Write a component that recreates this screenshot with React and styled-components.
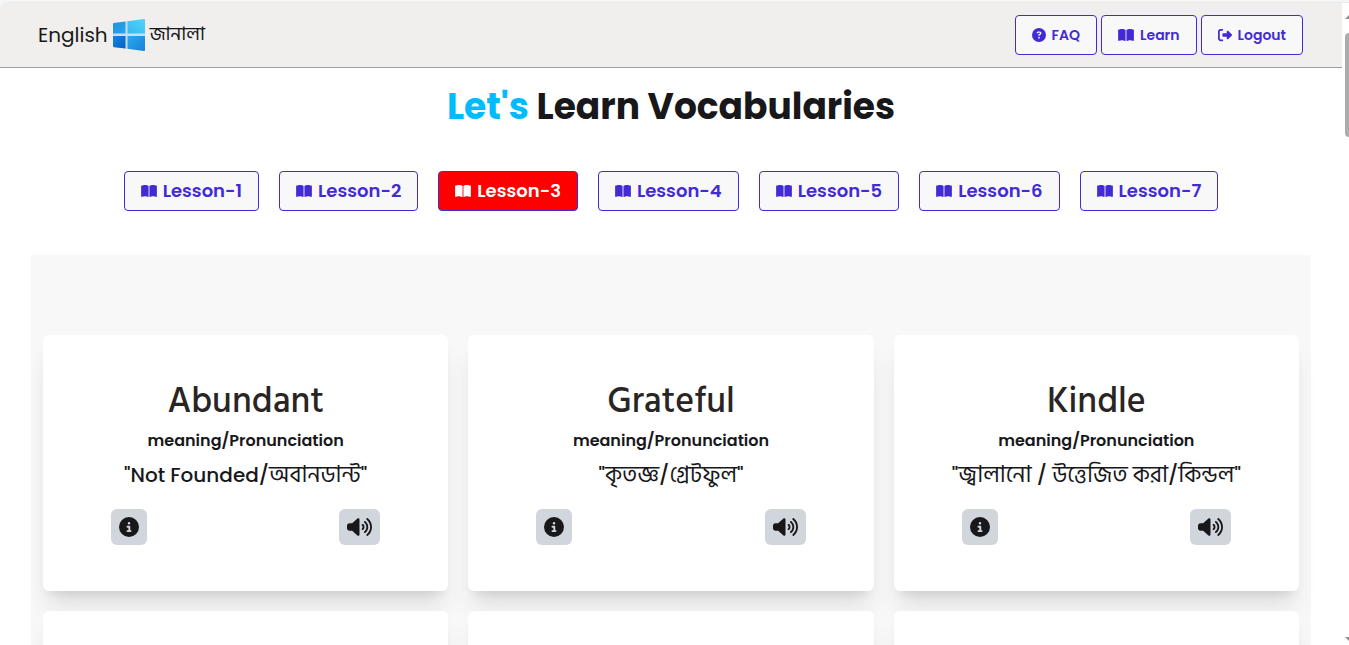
import React from 'react';
import styled, { createGlobalStyle } from 'styled-components';
import {
  FaCircleQuestion,
  FaBookOpen,
  FaRightFromBracket,
  FaCircleInfo,
  FaVolumeHigh,
} from 'react-icons/fa6';

const GlobalStyle = createGlobalStyle`
  *, *::before, *::after { box-sizing: border-box; }
  body {
    margin: 0;
    background: #f5f5f5;
    color: #18181b;
    font-family: Poppins, Inter, "Noto Sans", sans-serif;
    overflow: hidden;
  }
  h1, h2, p { margin: 0; }
`;

const Window = styled.div`
  display: flex;
  height: 100vh;
  padding-top: 2px;
`;

const Page = styled.div`
  flex: 1;
  min-width: 0;
  overflow: hidden;
  background: #ffffff;
  border-top: 1px solid #e9e9e9;
  border-top-left-radius: 8px;
`;

const ScrollTrack = styled.div`
  display: flex;
  flex-direction: column;
  align-items: flex-end;
  width: 7px;
  padding: 12px 0 4px;
  background: #ffffff;
  border-top: 1px solid #e9e9e9;
`;

const ScrollArrow = styled.svg`
  display: block;
  width: 4px;
  height: 4px;
  fill: #8f8f8f;
`;

const ScrollThumb = styled.div`
  width: 4px;
  height: 104px;
  margin: 14px 0 auto;
  background: #acacac;
  border-radius: 4px 0 0 4px;
`;

const Header = styled.header`
  display: flex;
  align-items: center;
  justify-content: space-between;
  padding: 12px 39px 12px 38px;
  background: #f0efed;
  border-bottom: 1px solid #9aa0a6;
`;

const Brand = styled.a`
  display: flex;
  align-items: center;
  gap: 4px;
  color: inherit;
  font-size: 20px;
  line-height: 28px;
  text-decoration: none;
`;

const Bengali = styled.span`
  font-family: "Hind Siliguri", "Noto Sans Bengali", "Noto Sans", sans-serif;
  font-size: ${(p) => p.$size || 23}px;
  font-weight: 400;
  line-height: 20px;
`;

const Logo = styled.svg`
  display: block;
  width: 34px;
  height: 32px;
`;

const Nav = styled.nav`
  display: flex;
  gap: 4px;
`;

const OutlineButton = styled.button`
  display: inline-flex;
  align-items: center;
  justify-content: center;
  gap: 6px;
  height: 40px;
  padding: 0 16px;
  border: 1px solid #422ad5;
  border-radius: 4px;
  background: ${(p) => (p.$active ? '#ff0000' : '#f8f8f8')};
  color: ${(p) => (p.$active ? '#ffffff' : '#422ad5')};
  font-family: inherit;
  font-size: ${(p) => (p.$large ? 18 : 14)}px;
  font-weight: 600;
  line-height: 20px;
  white-space: nowrap;
  cursor: pointer;

  svg {
    width: ${(p) => p.$icon || 16}px;
    height: 14px;
    flex: none;
  }
`;

const Title = styled.h1`
  margin-top: 19px;
  font-size: 36px;
  font-weight: 700;
  line-height: 40px;
  text-align: center;

  span { color: #00bcff; }
`;

const Lessons = styled.div`
  display: flex;
  flex-wrap: wrap;
  justify-content: center;
  gap: 20px;
  margin: 44px 0;
`;

const Words = styled.main`
  display: grid;
  grid-template-columns: repeat(3, 1fr);
  gap: 20px;
  max-width: 1280px;
  margin: 0 auto;
  padding: 80px 12px;
  background: #f8f8f8;
`;

const Card = styled.article`
  display: flex;
  flex-direction: column;
  align-items: center;
  min-height: 256px;
  padding: 46px 20px;
  background: #ffffff;
  border-radius: 6px;
  box-shadow: 0 20px 25px -5px rgba(0, 0, 0, 0.1), 0 8px 10px -6px rgba(0, 0, 0, 0.1);
`;

const Word = styled.h2`
  color: #292524;
  font-family: "Hind Siliguri", "Noto Sans", sans-serif;
  font-size: 36px;
  font-weight: 500;
  line-height: 40px;
`;

const Label = styled.p`
  margin-top: 8px;
  font-size: 16px;
  font-weight: 600;
  line-height: 24px;
`;

const Meaning = styled.p`
  margin-top: 8px;
  font-size: 20px;
  font-weight: 500;
  line-height: 28px;
  white-space: nowrap;
`;

const Actions = styled.div`
  display: flex;
  align-self: stretch;
  justify-content: space-between;
  margin-top: 20px;
  padding: 0 48px;
`;

const IconButton = styled.button`
  display: flex;
  padding: 8px;
  border: 0;
  border-radius: 6px;
  background: #d1d5dc;
  color: #18181b;
  cursor: pointer;

  svg {
    width: ${(p) => p.$icon}px;
    height: 20px;
  }
`;

const LESSONS = [1, 2, 3, 4, 5, 6, 7];

const WORDS = [
  { word: 'Abundant', meaning: <>"Not Founded/<Bengali>অবানডান্ট</Bengali>"</> },
  { word: 'Grateful', meaning: <>"<Bengali>কৃতজ্ঞ</Bengali>/<Bengali>গ্রেটফুল</Bengali>"</> },
  {
    word: 'Kindle',
    meaning: (
      <>
        "<Bengali>জ্বালানো</Bengali> / <Bengali>উত্তেজিত করা</Bengali>/<Bengali>কিন্ডল</Bengali>"
      </>
    ),
  },
];

function WindowLogo() {
  return (
    <Logo viewBox="0 0 34 32" aria-hidden="true">
      <defs>
        <linearGradient id="paneA" x1="0" y1="0" x2="1" y2="1">
          <stop offset="0" stopColor="#1f8fe0" />
          <stop offset="1" stopColor="#2ba6ec" />
        </linearGradient>
        <linearGradient id="paneB" x1="0" y1="1" x2="1" y2="0">
          <stop offset="0" stopColor="#37b8f2" />
          <stop offset="1" stopColor="#52d4fb" />
        </linearGradient>
        <linearGradient id="paneC" x1="0" y1="0" x2="1" y2="1">
          <stop offset="0" stopColor="#1587dd" />
          <stop offset="1" stopColor="#0560c4" />
        </linearGradient>
        <linearGradient id="paneD" x1="0" y1="0" x2="1" y2="1">
          <stop offset="0" stopColor="#2ba9ee" />
          <stop offset="1" stopColor="#1781d8" />
        </linearGradient>
      </defs>
      <path fill="#c9dfee" d="M1 4.200 33 0V32L1 28Z" />
      <path fill="url(#paneA)" d="M2 4 13.500 2.500V14.500H1V5Q1 4.200 2 4Z" />
      <path fill="url(#paneB)" d="M15.500 2.300 32 0Q33 0 33 1V14.500H15.500Z" />
      <path fill="url(#paneC)" d="M1 17H13.500V29.500L2 28.200Q1 28 1 27Z" />
      <path fill="url(#paneD)" d="M15.500 17H33V31Q33 32 32 32L15.500 29.700Z" />
    </Logo>
  );
}

export default function App() {
  return (
    <>
      <GlobalStyle />
      <Window>
        <Page>
          <Header>
            <Brand href="#home">
              <span>English</span>
              <WindowLogo />
              <Bengali $size={19}>জানালা</Bengali>
            </Brand>
            <Nav>
              <OutlineButton $icon={14}><FaCircleQuestion />FAQ</OutlineButton>
              <OutlineButton><FaBookOpen />Learn</OutlineButton>
              <OutlineButton $icon={14}><FaRightFromBracket />Logout</OutlineButton>
            </Nav>
          </Header>
          <Title><span>Let's</span> Learn Vocabularies</Title>
          <Lessons>
            {LESSONS.map((n) => (
              <OutlineButton key={n} $large $active={n === 3}>
                <FaBookOpen />Lesson-{n}
              </OutlineButton>
            ))}
          </Lessons>
          <Words>
            {WORDS.map(({ word, meaning }) => (
              <Card key={word}>
                <Word>{word}</Word>
                <Label>meaning/Pronunciation</Label>
                <Meaning>{meaning}</Meaning>
                <Actions>
                  <IconButton $icon={20} aria-label="Details"><FaCircleInfo /></IconButton>
                  <IconButton $icon={25} aria-label="Listen"><FaVolumeHigh /></IconButton>
                </Actions>
              </Card>
            ))}
            <Card />
            <Card />
            <Card />
          </Words>
        </Page>
        <ScrollTrack aria-hidden="true">
          <ScrollArrow viewBox="0 0 4 4"><path d="M0 4 4 0V4Z" /></ScrollArrow>
          <ScrollThumb />
          <ScrollArrow viewBox="0 0 4 4"><path d="M0 0H4V4Z" /></ScrollArrow>
        </ScrollTrack>
      </Window>
    </>
  );
}
